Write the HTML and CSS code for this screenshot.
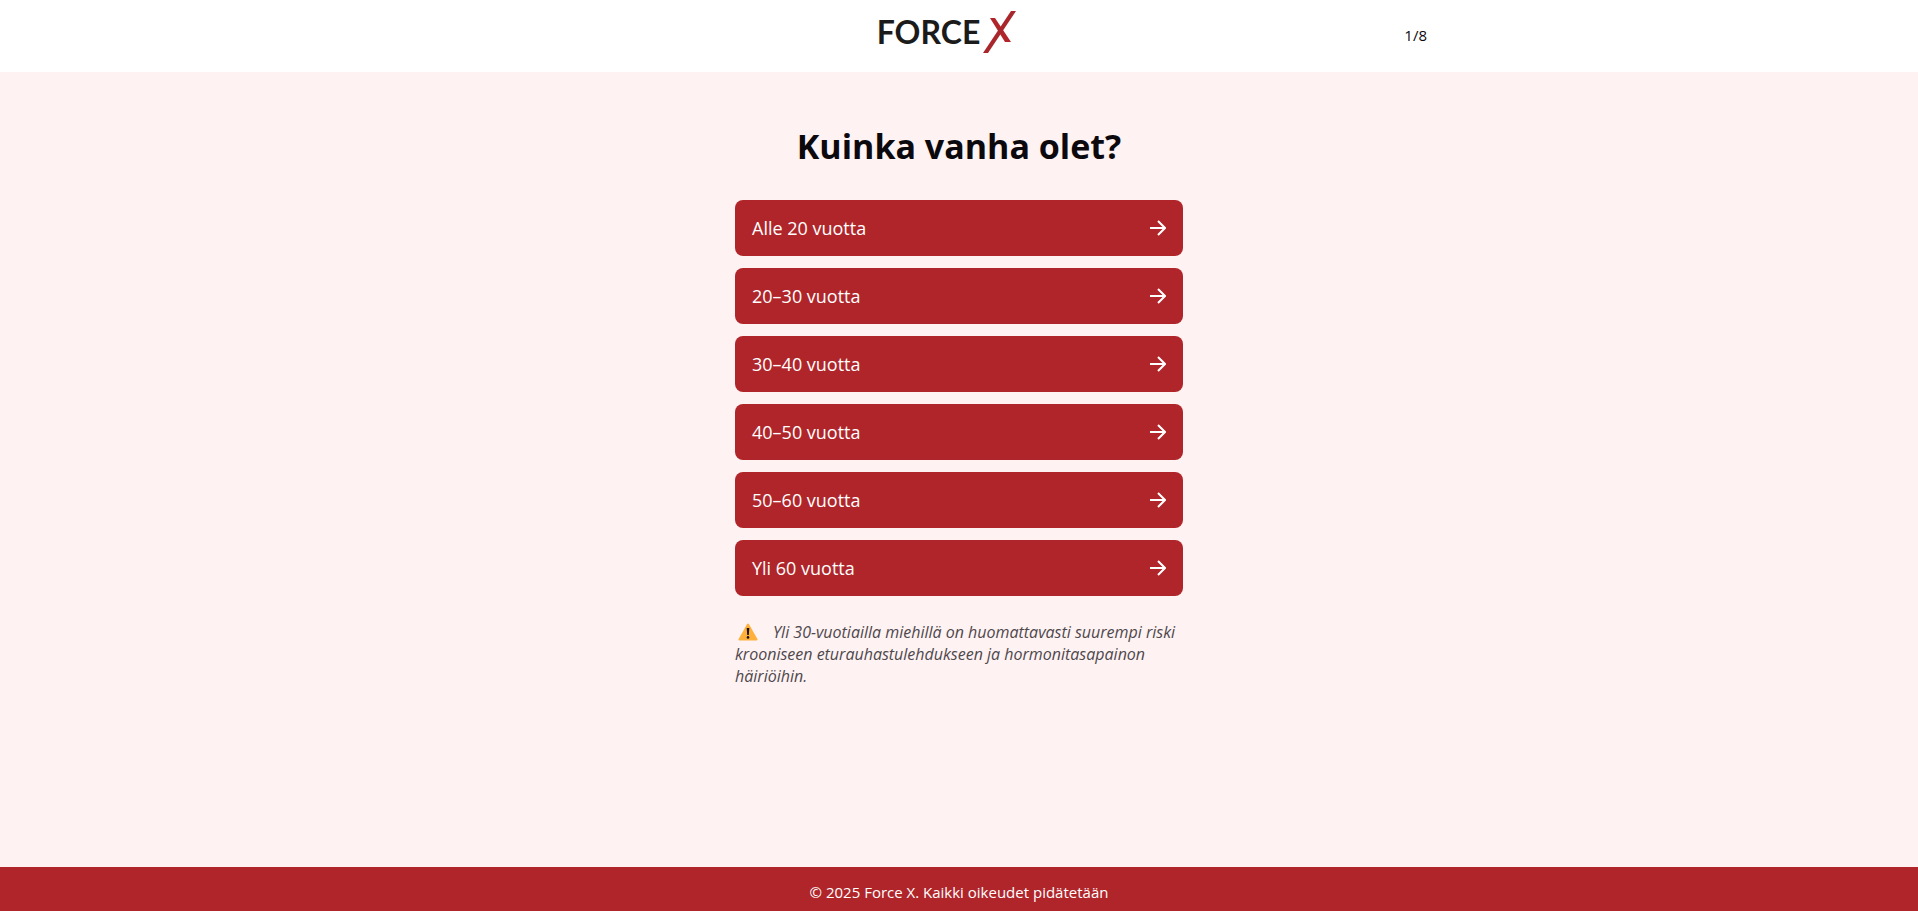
FILE: index.html
```html
<!DOCTYPE html>
<html lang="fi">
<head>
<meta charset="utf-8">
<meta name="viewport" content="width=device-width, initial-scale=1">
<title>Force X</title>
<link rel="stylesheet" href="styles.css">
</head>
<body>
<svg class="sprite" aria-hidden="true">
  <symbol id="arrow" viewBox="0 0 16 16"><path d="M0 8H15M8 1l7 7-7 7" fill="none" stroke="currentColor" stroke-width="2"/></symbol>
</svg>
<header class="header">
  <div class="header-inner">
    <a class="logo" href="#" aria-label="Force X">
      <span class="logo-word">FORCE</span>
      <svg class="logo-x" viewBox="0 0 34 42" aria-hidden="true">
        <path d="M7 7h5l16 24h-6z" fill="#b0252a"/>
        <path d="M0 42 28 0h5L5 42z" fill="#a8272d"/>
      </svg>
    </a>
    <span class="counter">1/8</span>
  </div>
</header>
<main class="quiz">
  <h1 class="title">Kuinka vanha olet?</h1>
  <div class="options">
    <button class="option" type="button">Alle 20 vuotta<svg class="arrow" aria-hidden="true"><use href="#arrow"/></svg></button>
    <button class="option" type="button">20–30 vuotta<svg class="arrow" aria-hidden="true"><use href="#arrow"/></svg></button>
    <button class="option" type="button">30–40 vuotta<svg class="arrow" aria-hidden="true"><use href="#arrow"/></svg></button>
    <button class="option" type="button">40–50 vuotta<svg class="arrow" aria-hidden="true"><use href="#arrow"/></svg></button>
    <button class="option" type="button">50–60 vuotta<svg class="arrow" aria-hidden="true"><use href="#arrow"/></svg></button>
    <button class="option" type="button">Yli 60 vuotta<svg class="arrow" aria-hidden="true"><use href="#arrow"/></svg></button>
  </div>
  <p class="note"><svg class="warning" viewBox="0 0 20 18" aria-hidden="true"><path d="M10 1.5 18.5 16.5H1.5z" fill="#ffb03b" stroke="#ffb03b" stroke-width="2" stroke-linejoin="round"/><path d="M8.7 5h2.6l-.5 7H9.2z" fill="#1b1018"/><circle cx="10" cy="14.4" r="1.3" fill="#1b1018"/></svg>Yli 30-vuotiailla miehillä on huomattavasti suurempi riski krooniseen eturauhastulehdukseen ja hormonitasapainon häiriöihin.</p>
</main>
<footer class="footer">© 2025 Force X. Kaikki oikeudet pidätetään</footer>
</body>
</html>
```
FILE: styles.css
```css
* { box-sizing: border-box; }

body {
  margin: 0;
  min-height: 100vh;
  display: flex;
  flex-direction: column;
  background: #fff2f2;
  color: #0b090d;
  font-family: "Segoe UI", "Open Sans", "Noto Sans", sans-serif;
  font-size: 15px;
}

.sprite { display: none; }

.header { background: #fff; }

.header-inner {
  display: grid;
  grid-template-columns: 1fr auto 1fr;
  align-items: center;
  max-width: 960px;
  height: 72px;
  margin: 0 auto;
  padding: 0 12px;
}

.logo {
  grid-column: 2;
  display: flex;
  align-items: center;
  gap: 3px;
  margin-right: 24px;
  padding-bottom: 8px;
  color: #1b1b1b;
  text-decoration: none;
}

.logo-word {
  font: 700 32px/42px Lato, sans-serif;
}

.logo-x { width: 34px; height: 42px; }

.counter {
  justify-self: end;
  padding-bottom: 2px;
}

.quiz {
  flex: 1;
  width: 100%;
  max-width: 480px;
  margin: 0 auto;
  padding: 48px 16px;
}

.title {
  margin: 0 0 28px;
  font-size: 34px;
  line-height: 52px;
  text-align: center;
}

.options {
  display: grid;
  gap: 12px;
}

.option {
  display: flex;
  align-items: center;
  justify-content: space-between;
  height: 56px;
  padding: 0 17px;
  border: 0;
  border-radius: 8px;
  background: #b0252a;
  color: #fff;
  font: inherit;
  font-size: 18px;
  text-align: left;
  cursor: pointer;
}

.arrow { width: 16px; height: 16px; }

.note {
  margin: 25px 0 0;
  color: #4d484c;
  font-size: 16px;
  font-style: italic;
  line-height: 22px;
}

.warning {
  width: 20px;
  height: 18px;
  margin: 0 15px 0 3px;
  vertical-align: -3px;
}

.footer {
  padding: 14px 16px 8px;
  background: #b0252a;
  color: #fff;
  line-height: 22px;
  text-align: center;
}
```
